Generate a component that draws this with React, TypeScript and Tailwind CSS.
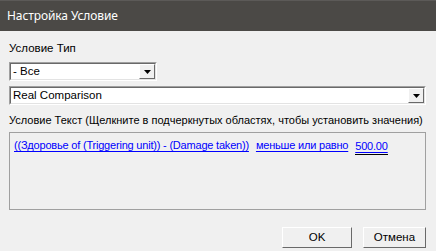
import { useState } from 'react';

const font = { fontFamily: '"Liberation Sans", Arial, sans-serif' };

function Arrow() {
  return (
    <svg width="7" height="4" viewBox="0 0 7 4" className="block">
      <path d="M0 0h7L3.5 4z" fill="#000" />
    </svg>
  );
}

function Combo({ value, width }: { value: string; width: string }) {
  return (
    <div className={`${width} h-[19px] flex border-t border-l border-[#a0a0a0] border-r border-b border-r-white border-b-white`}>
      <div className="flex-1 flex border-t border-l border-[#696969] border-r border-b border-r-[#e3e3e3] border-b-[#e3e3e3] bg-white">
        <div className="flex-1 pl-[2px] text-[11.5px] leading-[15px] text-black truncate">{value}</div>
        <div className="w-[16px] flex items-center justify-center bg-[#f0f0f0] border-t border-l border-white border-r border-b border-r-[#696969] border-b-[#696969]">
          <Arrow />
        </div>
      </div>
    </div>
  );
}

function Btn({ label, width }: { label: string; width: string }) {
  return (
    <button className={`${width} h-[21px] bg-[#f0f0f0] border-t border-l border-white border-r border-b border-r-[#696969] border-b-[#696969] text-[11.5px] leading-[17px] text-black`}>
      {label}
    </button>
  );
}

export default function App() {
  const [type] = useState('- Все');
  return (
    <div className="w-[436px] h-[251px] flex flex-col bg-[#f0f0f0] overflow-hidden" style={font}>
      <div className="h-[31px] shrink-0 bg-[#4b4946] border-t border-[#5c5a58] flex items-center px-[7px]">
        <span className="text-[12px] text-white tracking-[-0.1px]" style={{ fontFamily: '"Noto Sans", "Open Sans", sans-serif' }}>
          Настройка Условие
        </span>
      </div>

      <div className="flex-1 flex flex-col pl-[9px] pr-[10px]">
        <div className="mt-[10px] text-[11.5px] leading-[14px] text-black">Условие Тип</div>
        <div className="mt-[7px]">
          <Combo value={type} width="w-[148px]" />
        </div>
        <div className="mt-[5px]">
          <Combo value="Real Comparison" width="w-full" />
        </div>
        <div className="mt-[8px] text-[11px] leading-[14px] text-black whitespace-nowrap">
          Условие Текст (Щелкните в подчеркнутых областях, чтобы установить значения)
        </div>
        <div className="mt-[5px] h-[78px] border-t border-l border-[#a0a0a0] border-r border-b border-r-[#a0a0a0] border-b-[#a0a0a0] px-[4px] pt-[5px]">
          <div className="flex items-start gap-[7px] text-[11px] leading-[15px] text-[#0000ff] whitespace-nowrap tracking-[-0.2px]">
            <span className="underline underline-offset-2">((Здоровье of (Triggering unit)) - (Damage taken))</span>
            <span className="underline underline-offset-2">меньше или равно</span>
            <span className="underline underline-offset-2 border-b border-black leading-[16px]">500.00</span>
          </div>
        </div>
        <div className="mt-[17px] flex justify-end gap-[11px]">
          <Btn label="OK" width="w-[70px]" />
          <Btn label="Отмена" width="w-[63px]" />
        </div>
      </div>
    </div>
  );
}
